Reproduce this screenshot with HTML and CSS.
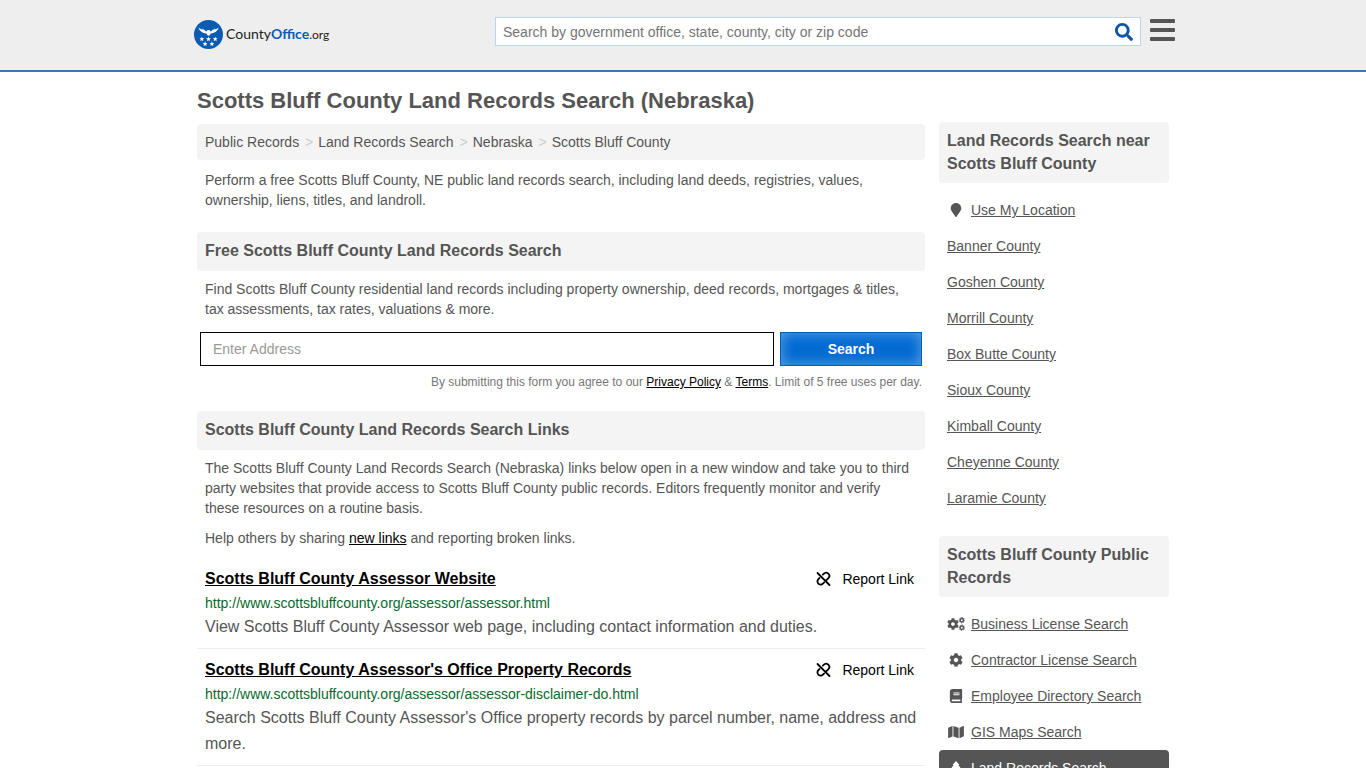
FILE: index.html
```html
<!DOCTYPE html>
<html lang="en">
  <head>
    <meta charset="UTF-8" />
    <meta name="viewport" content="width=device-width, initial-scale=1.0" />
    <title>Scotts Bluff County Land Records Search (Nebraska)</title>
    <link rel="stylesheet" href="styles.css">
  </head>
  <body>
    <svg class="sprite" aria-hidden="true">
      <symbol id="icon-unlink" viewBox="0 0 16 16">
        <g fill="none" stroke="currentColor" stroke-width="1.800" stroke-linecap="round" stroke-linejoin="round">
          <path d="M2.500 2l12 12" />
          <path d="M7.800 3.600l.9-.8a3.100 3.100 0 0 1 4.700 4.400l-2 2" />
          <path d="M4.600 6.900l-1.200 1.200a3.200 3.200 0 0 0 4.500 4.600l1.300-1.300" />
        </g>
      </symbol>
      <symbol id="icon-cog" viewBox="0 0 512 512">
        <path d="M487.400 315.700l-42.600-24.600c4.300-23.200 4.300-47 0-70.200l42.600-24.600c4.900-2.800 7.100-8.600 5.500-14-11.100-35.600-30-67.800-54.700-94.600-3.800-4.100-10-5.100-14.800-2.300L380.800 110c-17.900-15.400-38.500-27.300-60.800-35.100V25.800c0-5.600-3.900-10.500-9.400-11.700-36.700-8.200-74.300-7.800-109.200 0-5.500 1.200-9.400 6.100-9.400 11.700V75c-22.200 7.900-42.800 19.800-60.800 35.100L88.700 85.500c-4.900-2.800-11-1.900-14.800 2.300-24.700 26.700-43.600 58.900-54.700 94.600-1.700 5.400.6 11.200 5.500 14L67.300 221c-4.300 23.200-4.300 47 0 70.200l-42.600 24.600c-4.900 2.800-7.100 8.600-5.500 14 11.100 35.600 30 67.800 54.700 94.600 3.800 4.100 10 5.100 14.800 2.300l42.600-24.600c17.900 15.400 38.500 27.300 60.800 35.100v49.200c0 5.600 3.900 10.500 9.400 11.700 36.700 8.200 74.300 7.800 109.200 0 5.500-1.200 9.400-6.100 9.400-11.700v-49.200c22.200-7.900 42.800-19.800 60.800-35.100l42.600 24.600c4.900 2.800 11 1.900 14.800-2.300 24.700-26.700 43.600-58.900 54.700-94.600 1.500-5.500-.7-11.300-5.600-14.100zM256 336c-44.100 0-80-35.900-80-80s35.900-80 80-80 80 35.900 80 80-35.900 80-80 80z" />
      </symbol>
      <symbol id="star" viewBox="0 0 10 10">
        <path d="M5 0l1.300 3.500L10 3.700 7.100 6l1 3.700L5 7.600 1.900 9.700l1-3.700L0 3.700l3.700-.2z" />
      </symbol>
    </svg>

    <header class="header">
      <div class="container header__inner">
        <a href="#" class="logo">
          <svg class="logo__mark" viewBox="0 0 29 29" aria-hidden="true">
            <circle cx="14.500" cy="14.500" r="14.500" fill="#0a5cb3" />
            <g fill="#fff">
              <path d="M4.300 7.500c1.200 3 3.500 5.500 8 6l1.700 2.300 1.500-.3 1.300-2c4.500-.5 6.800-3 8-6-2 1.500-3.500 2-5 2.300L21.500 8c-2 1.500-3.500 2.300-5 3.500l-1-1.500h-2l-1 1.500C11 10.300 9.500 9.500 7.500 8l1.700 1.800c-1.500-.3-3-.8-4.900-2.300z" />
              <use href="#star" x="5.300" y="16.500" width="5" height="5" />
              <use href="#star" x="12" y="16.500" width="5" height="5" />
              <use href="#star" x="18.700" y="16.500" width="5" height="5" />
              <use href="#star" x="8.600" y="21.300" width="5" height="5" />
              <use href="#star" x="15.400" y="21.300" width="5" height="5" />
            </g>
          </svg>
          <span class="logo__text">County<b>Office</b><small>.org</small></span>
        </a>
        <form class="site-search">
          <input class="site-search__input" type="text" aria-label="Search the site" placeholder="Search by government office, state, county, city or zip code" />
          <button class="site-search__btn" type="button" aria-label="Search the site">
            <svg viewBox="0 0 512 512" width="18" height="18"><path fill="currentColor" d="M505 442.700L405.300 343c-4.500-4.500-10.600-7-17-7H372c27.600-35.300 44-79.700 44-128C416 93.100 322.900 0 208 0S0 93.100 0 208s93.100 208 208 208c48.300 0 92.700-16.400 128-44v16.300c0 6.400 2.500 12.500 7 17l99.700 99.700c9.400 9.400 24.600 9.400 33.900 0l28.300-28.300c9.400-9.400 9.400-24.600.1-34zM208 336c-70.700 0-128-57.200-128-128 0-70.700 57.200-128 128-128 70.700 0 128 57.200 128 128 0 70.700-57.200 128-128 128z" /></svg>
          </button>
        </form>
        <button class="menu-btn" type="button" aria-label="Menu">
          <span class="menu-btn__bar"></span>
          <span class="menu-btn__bar"></span>
          <span class="menu-btn__bar"></span>
        </button>
      </div>
    </header>

    <div class="container page">
      <main class="main">
        <h1 class="title">Scotts Bluff County Land Records Search (Nebraska)</h1>
        <nav class="breadcrumb" aria-label="Breadcrumb">
          <a href="#">Public Records</a>
          <a href="#">Land Records Search</a>
          <a href="#">Nebraska</a>
          <a href="#">Scotts Bluff County</a>
        </nav>
        <p class="text">Perform a free Scotts Bluff County, NE public land records search, including land deeds, registries, values, ownership, liens, titles, and landroll.</p>

        <section class="section">
          <h2 class="heading">Free Scotts Bluff County Land Records Search</h2>
          <p class="text">Find Scotts Bluff County residential land records including property ownership, deed records, mortgages &amp; titles, tax assessments, tax rates, valuations &amp; more.</p>
          <form class="address">
            <input class="address__input" type="text" aria-label="Address" placeholder="Enter Address" />
            <button class="address__btn" type="button">Search</button>
          </form>
          <p class="note">By submitting this form you agree to our <a href="#">Privacy Policy</a> &amp; <a href="#">Terms</a>. Limit of 5 free uses per day.</p>
        </section>

        <section class="section">
          <h2 class="heading">Scotts Bluff County Land Records Search Links</h2>
          <p class="text">The Scotts Bluff County Land Records Search (Nebraska) links below open in a new window and take you to third party websites that provide access to Scotts Bluff County public records. Editors frequently monitor and verify these resources on a routine basis.</p>
          <p class="text">Help others by sharing <a href="#">new links</a> and reporting broken links.</p>

          <article class="record">
            <div class="record__top">
              <a href="#" class="record__title">Scotts Bluff County Assessor Website</a>
              <button class="report" type="button"><svg class="report__icon" aria-hidden="true"><use href="#icon-unlink" /></svg>Report Link</button>
            </div>
            <p class="record__url">http://www.scottsbluffcounty.org/assessor/assessor.html</p>
            <p class="record__desc">View Scotts Bluff County Assessor web page, including contact information and duties.</p>
          </article>
          <article class="record">
            <div class="record__top">
              <a href="#" class="record__title">Scotts Bluff County Assessor's Office Property Records</a>
              <button class="report" type="button"><svg class="report__icon" aria-hidden="true"><use href="#icon-unlink" /></svg>Report Link</button>
            </div>
            <p class="record__url">http://www.scottsbluffcounty.org/assessor/assessor-disclaimer-do.html</p>
            <p class="record__desc">Search Scotts Bluff County Assessor's Office property records by parcel number, name, address and more.</p>
          </article>
        </section>
      </main>

      <aside class="sidebar">
        <section class="side">
          <h2 class="side__heading">Land Records Search near Scotts Bluff County</h2>
          <ul class="side__list">
            <li><a href="#" class="side__link">
              <svg class="side__icon" viewBox="-64 0 512 512" aria-hidden="true"><path d="M172.268 501.670C26.970 291.031 0 269.413 0 192 0 85.961 85.961 0 192 0s192 85.961 192 192c0 77.413-26.970 99.031-172.268 309.670-9.535 13.774-29.930 13.773-39.464 0z" /></svg>
              <span>Use My Location</span></a></li>
            <li><a href="#" class="side__link"><span>Banner County</span></a></li>
            <li><a href="#" class="side__link"><span>Goshen County</span></a></li>
            <li><a href="#" class="side__link"><span>Morrill County</span></a></li>
            <li><a href="#" class="side__link"><span>Box Butte County</span></a></li>
            <li><a href="#" class="side__link"><span>Sioux County</span></a></li>
            <li><a href="#" class="side__link"><span>Kimball County</span></a></li>
            <li><a href="#" class="side__link"><span>Cheyenne County</span></a></li>
            <li><a href="#" class="side__link"><span>Laramie County</span></a></li>
          </ul>
        </section>

        <section class="side">
          <h2 class="side__heading">Scotts Bluff County Public Records</h2>
          <ul class="side__list">
            <li><a href="#" class="side__link">
              <svg class="side__icon" viewBox="0 0 18 14" aria-hidden="true">
                <use href="#icon-cog" x="0" y="1" width="12" height="12" />
                <g fill="none" stroke="currentColor" stroke-width="1.500">
                  <circle cx="14.800" cy="3.200" r="1.700" />
                  <circle cx="14.800" cy="10.800" r="1.700" />
                </g>
                <path fill="none" stroke="currentColor" stroke-dasharray="1 1" d="M14.800.5a2.700 2.700 0 1 1 0 5.400 2.700 2.700 0 1 1 0-5.400M14.800 8.100a2.700 2.700 0 1 1 0 5.400 2.700 2.700 0 1 1 0-5.400" />
              </svg>
              <span>Business License Search</span></a></li>
            <li><a href="#" class="side__link">
              <svg class="side__icon" aria-hidden="true"><use href="#icon-cog" /></svg>
              <span>Contractor License Search</span></a></li>
            <li><a href="#" class="side__link">
              <svg class="side__icon" viewBox="0 0 448 512" aria-hidden="true"><path d="M448 360V24c0-13.300-10.700-24-24-24H96C43 0 0 43 0 96v320c0 53 43 96 96 96h328c13.300 0 24-10.700 24-24v-16c0-7.500-3.500-14.300-8.900-18.700-4.200-15.400-4.200-59.300 0-74.700 5.400-4.300 8.900-11.100 8.900-18.600zM128 134c0-3.300 2.700-6 6-6h212c3.300 0 6 2.700 6 6v20c0 3.300-2.700 6-6 6H134c-3.300 0-6-2.700-6-6v-20zm0 64c0-3.300 2.700-6 6-6h212c3.300 0 6 2.700 6 6v20c0 3.300-2.700 6-6 6H134c-3.300 0-6-2.700-6-6v-20zm253.400 250H96c-17.700 0-32-14.300-32-32 0-17.600 14.400-32 32-32h285.400c-1.900 17.100-1.900 46.900 0 64z" /></svg>
              <span>Employee Directory Search</span></a></li>
            <li><a href="#" class="side__link">
              <svg class="side__icon" viewBox="0 0 576 512" aria-hidden="true"><path d="M0 117.660v346.320c0 11.320 11.430 19.060 21.940 14.860L160 416V32L20.120 87.950A32 32 0 0 0 0 117.660zM192 416l192 64V96L192 32v384zM554.060 33.160L416 96v384l139.880-55.950A32 32 0 0 0 576 394.340V48.020c0-11.320-11.430-19.060-21.940-14.860z" /></svg>
              <span>GIS Maps Search</span></a></li>
            <li><a href="#" aria-current="page" class="side__link">
              <svg class="side__icon" viewBox="0 0 14 14" aria-hidden="true"><path d="M7 0l3.500 4H9.300L12 7.500h-1.500L13 11H8v3H6v-3H1l2.500-3.500H2L4.700 4H3.500z" /></svg>
              <span>Land Records Search</span></a></li>
          </ul>
        </section>
      </aside>
    </div>
  </body>
</html>
```
FILE: styles.css
```css
*,
*::before,
*::after {
  box-sizing: border-box;
  margin: 0;
  padding: 0;
}

body {
  background-color: #fff;
  color: #555;
  font-family: "Liberation Sans", Arial, sans-serif;
  font-size: 14px;
  line-height: 20px;
}

button,
input {
  font-family: inherit;
  font-size: 14px;
}

button {
  cursor: pointer;
}

.sprite {
  display: none;
}

.container {
  width: 100%;
  max-width: 988px;
  margin: 0 auto;
  padding: 0 8px;
}

/* Header */
.header {
  background-color: #eee;
  border-bottom: 2px solid #337ab7;
}

.header__inner {
  display: flex;
  align-items: flex-start;
  height: 70px;
  padding: 16px 2px 0 5px;
}

.logo {
  display: flex;
  align-items: center;
  flex: 0 0 301px;
  gap: 3px;
  padding-top: 4px;
  color: #222;
  text-decoration: none;
}

.logo__mark {
  width: 29px;
  height: 29px;
}

.logo__text {
  font-family: Lato, sans-serif;
  font-size: 14px;
}

.logo__text b {
  color: #0a5cb3;
}

.logo__text small {
  font-size: 12px;
}

.site-search {
  display: flex;
  flex: 1;
  height: 29px;
  margin-top: 1px;
  border: 1px solid #bdd5ea;
  background-color: #fff;
}

.site-search__input {
  flex: 1;
  min-width: 0;
  padding: 0 7px;
  border: 0;
  background: none;
}

.site-search__input::placeholder {
  color: #757575;
}

.site-search__btn {
  display: flex;
  align-items: center;
  justify-content: center;
  width: 32px;
  border: 0;
  background: none;
  color: #0b55a5;
}

.menu-btn {
  display: flex;
  flex-direction: column;
  gap: 5px;
  margin: 3px 0 0 9px;
  border: 0;
  background: none;
}

.menu-btn__bar {
  width: 25px;
  height: 4px;
  border-radius: 1px;
  background-color: #555;
}

/* Page */
.page {
  display: flex;
  gap: 14px;
}

.main {
  flex: 1;
  min-width: 0;
}

.title {
  margin: 15px 0 9px;
  font-size: 22px;
  line-height: 28px;
}

.breadcrumb {
  padding: 8px;
  border-radius: 4px;
  background-color: #f4f4f4;
}

.breadcrumb a {
  color: #555;
  text-decoration: none;
}

.breadcrumb a + a::before {
  content: ">";
  padding: 0 5px 0 2px;
  color: #ccc;
}

.text {
  padding: 0 8px;
  margin: 10px 0;
}

.text a,
.note a {
  color: #000;
}

.section {
  margin-top: 22px;
}

.heading {
  padding: 8px 8px 9px;
  border-radius: 4px;
  background-color: #f4f4f4;
  font-size: 16px;
  line-height: 22px;
}

.heading + .text {
  margin-top: 8px;
}

/* Address form */
.address {
  display: flex;
  gap: 6px;
  margin: 13px 3px 9px;
}

.address__input {
  flex: 1;
  min-width: 0;
  height: 34px;
  padding: 0 12px;
  border: 1px solid #000;
}

.address__input::placeholder {
  color: #999;
}

.address__btn {
  width: 142px;
  height: 34px;
  border: 1px solid #0a5cb3;
  background-color: #036ad1;
  box-shadow: inset 0 0 14px #5ea4e8;
  color: #fff;
  font-weight: bold;
}

.note {
  padding: 0 3px;
  color: #777;
  font-size: 12px;
  line-height: 14px;
  text-align: right;
}

/* Records */
.record {
  padding: 6px 8px 8px;
  border-bottom: 1px solid #eee;
}

.record__top {
  display: flex;
  align-items: center;
  justify-content: space-between;
  padding-right: 3px;
}

.record__title {
  color: #000;
  font-size: 16px;
  font-weight: bold;
  line-height: 29px;
}

.report {
  display: flex;
  align-items: center;
  gap: 11px;
  border: 0;
  background: none;
  color: #000;
}

.report__icon {
  width: 16px;
  height: 16px;
}

.record__url {
  margin-bottom: 1px;
  color: #066a2d;
}

.record__desc {
  font-size: 16px;
  line-height: 26px;
}

/* Sidebar */
.sidebar {
  flex: 0 0 230px;
  padding-top: 50px;
}

.side {
  margin-bottom: 20px;
}

.side__heading {
  margin-bottom: 9px;
  padding: 7px 8px 8px;
  border-radius: 4px;
  background-color: #f4f4f4;
  font-size: 16px;
  line-height: 23px;
}

.side__list {
  list-style: none;
}

.side__link {
  display: flex;
  align-items: center;
  gap: 6px;
  padding: 8px;
  border-radius: 4px;
  color: #555;
}

.side__link[aria-current] {
  background-color: #555;
  color: #fff;
}

.side__icon {
  width: 18px;
  height: 14px;
  fill: currentColor;
}
```
